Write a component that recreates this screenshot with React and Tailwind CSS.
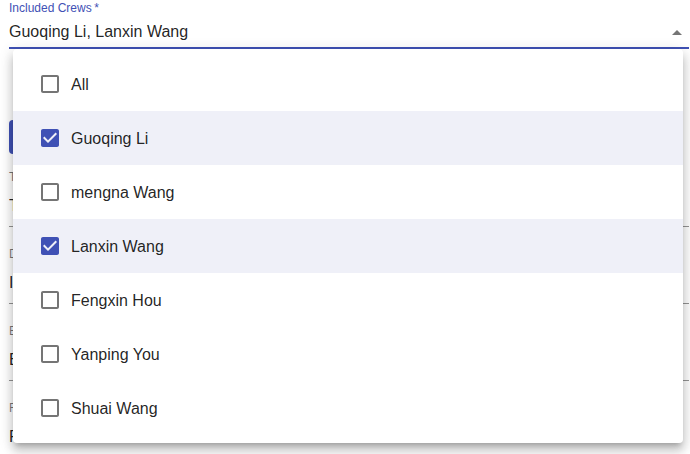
import React from 'react';

const crews = [
  { name: 'All', checked: false },
  { name: 'Guoqing Li', checked: true },
  { name: 'mengna Wang', checked: false },
  { name: 'Lanxin Wang', checked: true },
  { name: 'Fengxin Hou', checked: false },
  { name: 'Yanping You', checked: false },
  { name: 'Shuai Wang', checked: false },
];

const fields = [
  { label: 'Title', value: 'Test run' },
  { label: 'Description', value: 'Inspection' },
  { label: 'Equipment', value: 'Excavator' },
  { label: 'Field', value: 'Field A' },
];

function CheckIcon({ checked }) {
  return (
    <svg viewBox="0 0 24 24" className={`h-6 w-6 shrink-0 ${checked ? 'fill-[#3f51b5]' : 'fill-[#757575]'}`}>
      {checked ? (
        <path d="M19 3H5c-1.11 0-2 .9-2 2v14c0 1.1.89 2 2 2h14c1.11 0 2-.9 2-2V5c0-1.1-.89-2-2-2zm-9 14l-5-5 1.41-1.41L10 14.17l7.59-7.59L19 8l-9 9z" />
      ) : (
        <path d="M19 5v14H5V5h14m0-2H5c-1.1 0-2 .9-2 2v14c0 1.1.9 2 2 2h14c1.1 0 2-.9 2-2V5c0-1.1-.9-2-2-2z" />
      )}
    </svg>
  );
}

export default function App() {
  return (
    <div className="relative h-[454px] w-[690px] overflow-hidden bg-white font-['Liberation_Sans',Arial,sans-serif] text-[rgba(0,0,0,0.87)]">
      {/* form behind the menu */}
      <div className="pl-[9px] pr-[1px] pt-[1px]">
        <div className="relative border-b-2 border-[#3f51b5] pb-[6px]">
          <div className="text-[12px] leading-[14px] text-[#3f51b5]">Included Crews{'\u2009'}*</div>
          <div className="mt-[7px] text-[16px] leading-[19px]">Guoqing Li, Lanxin Wang</div>
          <svg viewBox="0 0 24 24" className="absolute right-0 top-[20px] h-6 w-6 fill-[#757575]">
            <path d="M7 14l5-5 5 5z" />
          </svg>
        </div>

        <div className="mt-[71px] h-[34px] w-[160px] rounded bg-[#3f51b5]" />

        <div className="mt-[16px] flex flex-col gap-[20px]">
          {fields.map((f) => (
            <div key={f.label} className="border-b border-[rgba(0,0,0,0.42)] pb-[11px]">
              <div className="text-[12px] leading-[14px] text-[rgba(0,0,0,0.54)]">{f.label}</div>
              <div className="mt-[12px] text-[16px] leading-[19px]">{f.value}</div>
            </div>
          ))}
        </div>
      </div>

      {/* open select menu */}
      <div className="absolute left-[13px] top-[49px] w-[670px] rounded bg-white py-2 shadow-[0px_5px_5px_-3px_rgba(0,0,0,0.2),0px_8px_10px_1px_rgba(0,0,0,0.14),0px_3px_14px_2px_rgba(0,0,0,0.12)]">
        {crews.map((c) => (
          <div
            key={c.name}
            className={`flex h-[54px] items-center pl-[25px] ${c.checked ? 'bg-[#eff0f8]' : ''}`}
          >
            <CheckIcon checked={c.checked} />
            <span className="ml-[9px] text-[16px] leading-[19px]">{c.name}</span>
          </div>
        ))}
      </div>
    </div>
  );
}
